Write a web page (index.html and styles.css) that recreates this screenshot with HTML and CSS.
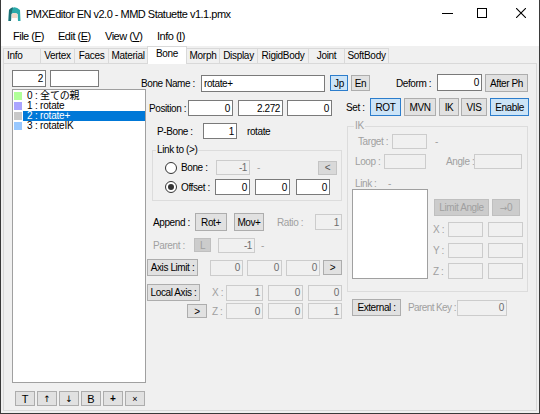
FILE: index.html
```html
<!DOCTYPE html>
<html>
<head>
<meta charset="utf-8">
<title>PMXEditor</title>
<link rel="stylesheet" href="styles.css">
</head>
<body>
<div class="window">
  <div class="titlebar">
    <svg class="appicon" width="13" height="16" viewBox="0 0 13 16">
      <path d="M1 4 Q6.5 -1.5 12 4 L12.5 15 L10 15 L9.6 8 Q6.5 6 3.4 8 L3 15 L0.5 15 Z" fill="#2aa9aa"/>
      <path d="M1 4 Q3 1.5 5 1.2 L3.4 8 L3 15 L0.5 15 Z" fill="#1d6f74"/>
      <path d="M3.6 8 Q6.5 6.2 9.4 8 L9.2 12 L3.8 12 Z" fill="#f2d8c8"/>
    </svg>
    <span class="title">PMXEditor EN v2.0 - MMD Statuette v1.1.pmx</span>
    <svg class="wc-min" width="11" height="1" viewBox="0 0 11 1"><rect x="0" y="0" width="11" height="1" fill="#000"/></svg>
    <svg class="wc-max" width="10" height="10" viewBox="0 0 10 10"><rect x="0.5" y="0.5" width="9" height="9" fill="none" stroke="#000" stroke-width="1"/></svg>
    <svg class="wc-close" width="10" height="10" viewBox="0 0 10 10"><path d="M0 0 L10 10 M10 0 L0 10" stroke="#000" stroke-width="1.1"/></svg>
  </div>
  <div class="menubar">
    <span class="mi mi-file">File (<u>F</u>)</span>
    <span class="mi mi-edit">Edit (<u>E</u>)</span>
    <span class="mi mi-view">View (<u>V</u>)</span>
    <span class="mi">Info (<u>I</u>)</span>
  </div>
  <div class="tabs">
    <span class="tab tab-info">Info</span>
    <span class="tab w35">Vertex</span>
    <span class="tab w35">Faces</span>
    <span class="tab w40">Material</span>
    <span class="tab sel w40">Bone</span>
    <span class="tab w34">Morph</span>
    <span class="tab w39">Display</span>
    <span class="tab w52">RigidBody</span>
    <span class="tab w37">Joint</span>
    <span class="tab w45">SoftBody</span>
  </div>
  <div class="page">
    <div class="leftcol">
      <div class="numrow">
        <div class="tb w34 h17">2</div>
        <div class="tb w49 h17 ml4"></div>
      </div>
      <div class="bonelist">
        <div class="li"><span class="sw sw0"></span><span class="lt">0 : 全ての親</span></div>
        <div class="li"><span class="sw sw1"></span><span class="lt">1 : rotate</span></div>
        <div class="li"><span class="sw sw2"></span><span class="lt sel">2 : rotate+</span></div>
        <div class="li"><span class="sw sw3"></span><span class="lt">3 : rotateIK</span></div>
      </div>
      <div class="tools">
        <button class="btn tool">T</button>
        <button class="btn tool arrow">↑</button>
        <button class="btn tool arrow">↓</button>
        <button class="btn tool">B</button>
        <button class="btn tool plus">+</button>
        <button class="btn tool small">×</button>
      </div>
    </div>
    <div class="main">
      <div class="toprow">
        <span class="lb w60 h19">Bone Name :</span>
        <div class="tb left w124 h17 mt1">rotate+</div>
        <button class="btn blue w18 h16 ml5 mt1">Jp</button>
        <button class="btn w19 h16 ml3 mt1">En</button>
        <span class="lb w41 h19 ml26">Deform :</span>
        <div class="tb w45 h17">0</div>
        <button class="btn w43 h18 ml3">After Ph</button>
      </div>
      <div class="body">
        <div class="center">
          <div class="row h16 mt7">
            <span class="lb w39 ml8">Position :</span>
            <div class="tb w45 h16">0</div>
            <div class="tb w45 h16 ml5">2.272</div>
            <div class="tb w45 h16 ml4">0</div>
          </div>
          <div class="row h16 mt7">
            <span class="lb w46 ml16">P-Bone :</span>
            <div class="tb w34 h16">1</div>
            <span class="lb ml10">rotate</span>
          </div>
          <fieldset class="grp grp-link">
            <legend>Link to (&gt;)</legend>
            <div class="row h15 mt4">
              <span class="radio ml12"></span>
              <span class="lb w35 ml4">Bone :</span>
              <div class="tb dis w34 h15">-1</div>
              <span class="lb gray w5 ml7">-</span>
              <button class="btn lite w19 h14 ml56">&lt;</button>
            </div>
            <div class="row h16 mt4">
              <span class="radio on ml12"></span>
              <span class="lb w34 ml4">Offset :</span>
              <div class="tb w35 h16">0</div>
              <div class="tb w35 h16 ml5">0</div>
              <div class="tb w34 h16 ml6">0</div>
            </div>
          </fieldset>
          <div class="row h18 mt12">
            <span class="lb w42 ml12">Append :</span>
            <button class="btn w32 h18">Rot+</button>
            <button class="btn w30 h18 ml7">Mov+</button>
            <span class="lb gray w38 ml13">Ratio :</span>
            <div class="tb dis w27 h16">1</div>
          </div>
          <div class="row h16 mt6">
            <span class="lb gray w41 ml12">Parent :</span>
            <button class="btn off w17 h14">L</button>
            <div class="tb dis w37 h15 ml7">-1</div>
            <span class="lb gray ml6">-</span>
          </div>
          <div class="row h17 mt6">
            <button class="btn w51 h17 ml6">Axis Limit :</button>
            <div class="tb dis w33 h16 ml12">0</div>
            <div class="tb dis w35 h16 ml4">0</div>
            <div class="tb dis w34 h16 ml4">0</div>
            <button class="btn w19 h15 ml3">&gt;</button>
          </div>
          <div class="row h17 mt8">
            <button class="btn w53 h17 ml6">Local Axis :</button>
            <span class="lb gray w14 ml12">X :</span>
            <div class="tb dis w37 h16">1</div>
            <div class="tb dis w35 h16 ml5">0</div>
            <div class="tb dis w34 h16 ml5">0</div>
          </div>
          <div class="row h16 mt2">
            <button class="btn w20 h14 ml46">&gt;</button>
            <span class="lb gray w14 ml5">Z :</span>
            <div class="tb dis w37 h16">0</div>
            <div class="tb dis w35 h16 ml5">0</div>
            <div class="tb dis w34 h16 ml5">1</div>
          </div>
        </div>
        <div class="right">
          <div class="row h18 mt5">
            <span class="lb w24">Set :</span>
            <button class="btn blue w31 h18">ROT</button>
            <button class="btn w32 h18 ml3">MVN</button>
            <button class="btn w20 h18 ml3">IK</button>
            <button class="btn w26 h18 ml2">VIS</button>
            <button class="btn blue w39 h18 ml3">Enable</button>
          </div>
          <fieldset class="grp grp-ik">
            <legend class="gray">IK</legend>
            <div class="row h15 mt2">
              <span class="lb gray w34 ml10">Target :</span>
              <div class="tb dis w35 h15"></div>
              <span class="lb gray ml8">-</span>
            </div>
            <div class="row h15 mt5">
              <span class="lb gray w29 ml7">Loop :</span>
              <div class="tb dis w42 h15"></div>
              <span class="lb gray w28 ml20">Angle :</span>
              <div class="tb dis w48 h15"></div>
            </div>
            <div class="row h12 mt8">
              <span class="lb gray w33 ml7">Link :</span>
              <span class="lb gray">-</span>
            </div>
            <div class="iklow">
              <div class="linklist ml4"></div>
              <div class="ikright ml5">
                <div class="row h17 mt10">
                  <button class="btn off w55 h17 ml1">Limit Angle</button>
                  <button class="btn off w28 h17 ml3"><span class="arr">→</span>0</button>
                </div>
                <div class="row h15 mt6">
                  <span class="lb gray w15">X :</span>
                  <div class="tb dis w35 h15"></div>
                  <div class="tb dis w35 h15 ml5"></div>
                </div>
                <div class="row h15 mt6">
                  <span class="lb gray w15">Y :</span>
                  <div class="tb dis w35 h15"></div>
                  <div class="tb dis w35 h15 ml5"></div>
                </div>
                <div class="row h16 mt5">
                  <span class="lb gray w15">Z :</span>
                  <div class="tb dis w35 h16"></div>
                  <div class="tb dis w35 h16 ml5"></div>
                </div>
              </div>
            </div>
          </fieldset>
          <div class="row h17 mt7">
            <button class="btn w49 h17 ml6">External :</button>
            <span class="lb gray w49 ml7 tight">Parent Key :</span>
            <div class="tb dis w50 h16">0</div>
          </div>
        </div>
      </div>
    </div>
  </div>
</div>
</body>
</html>
```

FILE: styles.css
```css
* { box-sizing: border-box; }
html, body { margin: 0; padding: 0; }
body {
  width: 540px; height: 414px; overflow: hidden;
  font-family: "Liberation Sans", Arial, "Noto Sans CJK JP", sans-serif;
  font-size: 10px; letter-spacing: -0.4px; color: #000;
  background: #f0f0f0;
}
.window {
  width: 540px; height: 414px;
  border: 1px solid #3a3a3a; border-top: 0;
  background: #f0f0f0;
  display: flex; flex-direction: column;
}
/* title bar */
.titlebar { height: 28px; background: #fff; display: flex; align-items: flex-start; flex-shrink: 0; }
.appicon { margin: 6px 0 0 7px; flex-shrink: 0; }
.title {
  margin: 7px 0 0 5px; flex: 1;
  font-size: 11px; line-height: 14px; letter-spacing: -0.5px; white-space: nowrap;
}
.wc-min { margin: 13px 24px 0 0; flex-shrink: 0; }
.wc-max { margin: 8px 29px 0 0; flex-shrink: 0; }
.wc-close { margin: 8px 13px 0 0; flex-shrink: 0; }
/* menu */
.menubar {
  height: 18px; background: #fff; display: flex; align-items: flex-start;
  padding-left: 12px; flex-shrink: 0;
  font-size: 11px; line-height: 16px; letter-spacing: -0.5px;
}
.mi { white-space: nowrap; }
.mi-file { width: 45px; }
.mi-edit { width: 47px; }
.mi-view { width: 52px; }
/* tabs */
.tabs { height: 17px; display: flex; align-items: flex-end; margin-left: 2px; flex-shrink: 0; letter-spacing: -0.3px; }
.tab {
  height: 15px; border: 1px solid #d9d9d9; border-bottom: 0;
  margin-right: -1px; text-align: center; line-height: 14px;
  background: #f0f0f0; white-space: nowrap; flex-shrink: 0;
}
.tab-info { width: 38px; text-align: left; padding-left: 3px; }
.tab.sel {
  height: 18px; margin-bottom: -1px; line-height: 13px;
  background: #fff; position: relative; z-index: 1;
}
/* page */
.page {
  margin: 0 0 2px 2px; width: 534px; flex: 1;
  border: 1px solid #d9d9d9; background: #f0f0f0;
  padding: 6px 0 0 8px;
  display: flex; align-items: flex-start;
}
.leftcol { width: 129px; display: flex; flex-direction: column; flex-shrink: 0; }
.numrow { display: flex; height: 17px; }
.bonelist {
  margin-top: 2px; width: 134px; height: 294px; margin-right: -5px;
  background: #fff; border: 1px solid #a0a0a0; padding-top: 1px;
  flex-shrink: 0;
}
.li { display: flex; align-items: center; height: 10px; padding-left: 1px; }
.sw { width: 8px; height: 8px; flex-shrink: 0; }
.sw0 { background: #b0ff98; }
.sw1 { background: #aaa4ff; }
.sw2 { background: #c8c8c8; }
.sw3 { background: #98c8ff; }
.lt {
  flex: 1; margin-left: 1px; padding-left: 4px; height: 10px; line-height: 10px;
  white-space: nowrap; letter-spacing: -0.2px;
}
.lt.sel { background: #0078d7; color: #fff; }
.tools { display: flex; gap: 2px; margin: 8px 0 0 3px; }
.tool { width: 20px; height: 15px; font-size: 11px; letter-spacing: 0; }
.tool.arrow { font-family: "DejaVu Sans", sans-serif; font-size: 9px; }
.tool.plus { font-weight: bold; font-size: 10px; }
.tool.small { font-size: 9px; }

.main { width: 389px; display: flex; flex-direction: column; flex-shrink: 0; }
.toprow { display: flex; align-items: flex-start; height: 19px; margin-top: 4px; }
.body { display: flex; align-items: flex-start; }
.center { width: 205px; display: flex; flex-direction: column; flex-shrink: 0; }
.right { width: 184px; display: flex; flex-direction: column; flex-shrink: 0; }

.row { display: flex; align-items: center; flex-shrink: 0; }

/* controls */
.lb { white-space: nowrap; flex-shrink: 0; display: flex; align-items: center; }
.tight { letter-spacing: -0.6px; }
.gray { color: #a0a0a0; }
.tb {
  background: #fff; border: 1px solid #7a7a7a; flex-shrink: 0;
  display: flex; align-items: center; justify-content: flex-end;
  padding: 0 2px; white-space: nowrap; overflow: hidden;
}
.tb.left { justify-content: flex-start; }
.tb.dis { background: #f0f0f0; border-color: #cccccc; color: #6d6d6d; }
button {
  font: inherit; letter-spacing: inherit; margin: 0; padding: 0;
  color: #000;
}
.btn {
  background: #e1e1e1; border: 1px solid #adadad; flex-shrink: 0;
  display: flex; align-items: center; justify-content: center;
  white-space: nowrap;
}
.btn.blue { background: #cce4f7; border-color: #2c7dcc; }
.btn.off { background: #cccccc; border-color: #bfbfbf; color: #a0a0a0; }
.btn.lite { background: #d9d9d9; border-color: #c4c4c4; color: #555; }
.arr { font-family: "DejaVu Sans", sans-serif; font-size: 9px; }
.radio {
  width: 12px; height: 12px; border: 1px solid #333; border-radius: 50%;
  background: #fff; flex-shrink: 0;
  display: flex; align-items: center; justify-content: center;
}
.radio.on::after { content: ""; width: 6px; height: 6px; border-radius: 50%; background: #333; }

fieldset.grp { margin: 0; padding: 0; min-width: 0; border: 1px solid #dcdcdc; flex-shrink: 0; }
fieldset.grp legend { padding: 0 1px; font-size: 10px; line-height: 12px; }
.grp-link { margin-top: 5px !important; margin-left: 11px !important; width: 190px; padding-bottom: 5px !important; }
.grp-link legend { margin-left: 3px; }
.grp-ik { margin-top: 4px !important; margin-left: 1px !important; width: 181px; padding-bottom: 12px !important; }
.grp-ik legend { margin-left: 6px; }
.iklow { display: flex; align-items: flex-start; }
.linklist { width: 76px; height: 90px; background: #fff; border: 1px solid #a0a0a0; flex-shrink: 0; }
.ikright { display: flex; flex-direction: column; }

/* sizes */
.w5 { width: 5px; } .w14 { width: 14px; } .w15 { width: 15px; } .w17 { width: 17px; }
.w18 { width: 18px; } .w19 { width: 19px; } .w20 { width: 20px; } .w24 { width: 24px; }
.w26 { width: 26px; } .w27 { width: 27px; } .w28 { width: 28px; } .w29 { width: 29px; }
.w30 { width: 30px; } .w31 { width: 31px; } .w32 { width: 32px; } .w33 { width: 33px; }
.w34 { width: 34px; } .w35 { width: 35px; } .w37 { width: 37px; } .w38 { width: 38px; }
.w39 { width: 39px; } .w40 { width: 40px; } .w41 { width: 41px; } .w42 { width: 42px; }
.w43 { width: 43px; } .w45 { width: 45px; } .w46 { width: 46px; } .w48 { width: 48px; }
.w49 { width: 49px; } .w50 { width: 50px; } .w51 { width: 51px; } .w52 { width: 52px; }
.w53 { width: 53px; } .w55 { width: 55px; } .w60 { width: 60px; } .w124 { width: 124px; }
.h12 { height: 12px; } .h14 { height: 14px; } .h15 { height: 15px; } .h16 { height: 16px; }
.h17 { height: 17px; } .h18 { height: 18px; } .h19 { height: 19px; }
.ml1 { margin-left: 1px; } .ml2 { margin-left: 2px; } .ml3 { margin-left: 3px; }
.ml4 { margin-left: 4px; } .ml5 { margin-left: 5px; } .ml6 { margin-left: 6px; }
.ml7 { margin-left: 7px; } .ml8 { margin-left: 8px; } .ml10 { margin-left: 10px; }
.ml12 { margin-left: 12px; } .ml13 { margin-left: 13px; } .ml16 { margin-left: 16px; }
.ml20 { margin-left: 20px; } .ml26 { margin-left: 26px; } .ml46 { margin-left: 46px; }
.ml56 { margin-left: 56px; }
.mt1 { margin-top: 1px; } .mt2 { margin-top: 2px; } .mt4 { margin-top: 4px; }
.mt5 { margin-top: 5px; } .mt6 { margin-top: 6px; } .mt7 { margin-top: 7px; }
.mt8 { margin-top: 8px; } .mt10 { margin-top: 10px; } .mt12 { margin-top: 12px; }
```
